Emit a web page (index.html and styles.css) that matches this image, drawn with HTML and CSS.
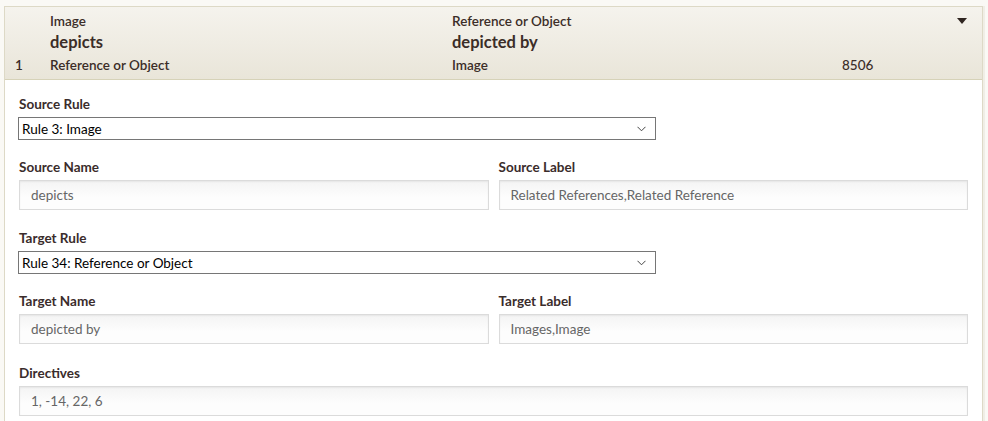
FILE: index.html
```html
<!DOCTYPE html>
<html>
<head>
<meta charset="utf-8">
<link rel="stylesheet" href="styles.css">
</head>
<body>
<div class="panel">
  <div class="head">
    <div class="hcol num"><span class="sub">1</span></div>
    <div class="hcol c2">
      <span class="top">Image</span>
      <span class="mid">depicts</span>
      <span class="sub">Reference or Object</span>
    </div>
    <div class="hcol c3">
      <span class="top">Reference or Object</span>
      <span class="mid">depicted by</span>
      <span class="sub">Image</span>
    </div>
    <div class="hcol c4"><span class="sub id">8506</span></div>
    <div class="hcol c5">
      <svg class="caret" width="10" height="6" viewBox="0 0 10 6"><path d="M0 0H10L5 6Z" fill="#2f2520"/></svg>
    </div>
  </div>
  <div class="body">
    <div class="group">
      <div class="label">Source Rule</div>
      <div class="select"><span>Rule 3: Image</span>
        <svg class="chev" width="9" height="6" viewBox="0 0 9 6"><path d="M0.5 0.8L4.5 4.8L8.5 0.8" fill="none" stroke="#444" stroke-width="1"/></svg>
      </div>
    </div>
    <div class="row">
      <div class="group half">
        <div class="label">Source Name</div>
        <div class="input">depicts</div>
      </div>
      <div class="group half">
        <div class="label">Source Label</div>
        <div class="input">Related References,Related Reference</div>
      </div>
    </div>
    <div class="group">
      <div class="label">Target Rule</div>
      <div class="select"><span>Rule 34: Reference or Object</span>
        <svg class="chev" width="9" height="6" viewBox="0 0 9 6"><path d="M0.5 0.8L4.5 4.8L8.5 0.8" fill="none" stroke="#444" stroke-width="1"/></svg>
      </div>
    </div>
    <div class="row">
      <div class="group half">
        <div class="label">Target Name</div>
        <div class="input">depicted by</div>
      </div>
      <div class="group half">
        <div class="label">Target Label</div>
        <div class="input">Images,Image</div>
      </div>
    </div>
    <div class="group last">
      <div class="label">Directives</div>
      <div class="input">1, -14, 22, 6</div>
    </div>
  </div>
</div>
</body>
</html>
```
FILE: styles.css
```css
html, body {
  margin: 0;
  padding: 0;
  background: #faf9f5;
  height: 100%;
  overflow: hidden;
}
body {
  font-family: Lato, "Open Sans", sans-serif;
  color: #3b2d28;
}
.panel {
  margin: 6px 5px 0 4px;
  border: 1px solid #ddd9c6;
  border-bottom: none;
  box-shadow: 2px 0 0 #f0eee6;
  background: #fff;
  height: calc(100% - 7px);
  overflow: hidden;
}
.head {
  display: flex;
  background: linear-gradient(#f5f3ed, #e9e5d9);
  border-bottom: 1px solid #d6d2b8;
  padding: 5px 0 5px 0;
}
.hcol {
  display: flex;
  flex-direction: column;
  justify-content: flex-end;
}
.num { width: 35px; padding-left: 10px; }
.c2 { width: 402px; }
.c3 { width: 390px; }
.c4 { width: 115px; }
.c5 { flex: 1; justify-content: flex-start; align-items: flex-start; padding-top: 6px; }
.top {
  font-size: 13.5px;
  font-weight: 600;
  line-height: 18px;
}
.mid {
  font-size: 16.5px;
  font-weight: 700;
  line-height: 22px;
  margin-top: 1px;
}
.sub {
  font-size: 13.5px;
  font-weight: 600;
  line-height: 18px;
  margin-top: 3px;
}
.id { font-weight: 500; }
.caret { display: block; }
.body {
  padding: 15px 14px 0 14px;
}
.row {
  display: flex;
  gap: 10px;
}
.half { flex: 1; min-width: 0; }
.group {
  margin-bottom: 18px;
}
.row .group {
  margin-bottom: 19px;
}
.last {
  margin-top: 1px;
}
.label {
  font-size: 13.5px;
  font-weight: 700;
  line-height: 18px;
  margin-bottom: 4px;
  color: #3a2c2b;
}
.select {
  width: 624px;
  height: 21px;
  border: 1px solid #767676;
  display: flex;
  align-items: center;
  justify-content: space-between;
  padding: 0 9px 0 3px;
  font-size: 13.5px;
  color: #000;
  box-sizing: content-box;
  margin-left: -1px;
}
.chev { display: block; }
.input {
  height: 28px;
  border: 1px solid #dbdbdb;
  background: linear-gradient(#f4f4f4, #fdfdfd 60%);
  box-shadow: inset 0 1px 2px rgba(0,0,0,0.06);
  display: flex;
  align-items: center;
  padding: 0 11px;
  font-size: 13.5px;
  color: #666;
}
```
